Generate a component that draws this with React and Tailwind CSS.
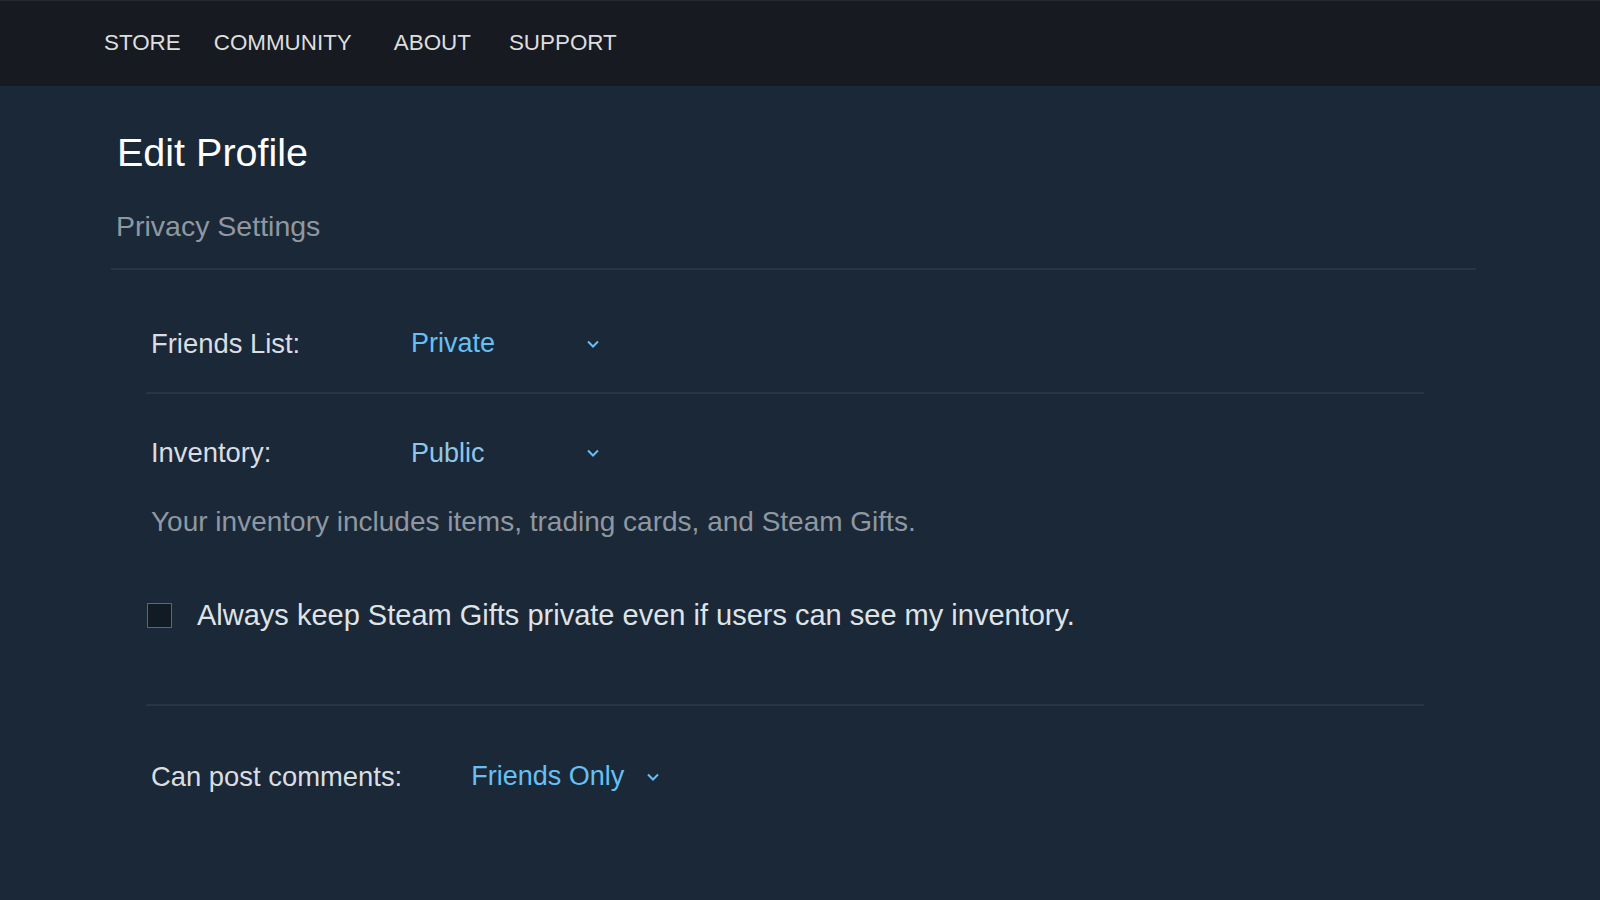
function Chevron() {
    return (
        <svg width="12" height="8" viewBox="0 0 12 8" fill="none" className="shrink-0">
            <path d="M1 1.5 L6 6.5 L11 1.5" stroke="currentColor" strokeWidth="2" />
        </svg>
    );
}

function Select({ value, color }) {
    return (
        <div className={`flex min-w-[188px] items-center justify-between gap-5 text-[27px] ${color}`}>
            <span>{value}</span>
            <span className="text-[#66c0f4]">
                <Chevron />
            </span>
        </div>
    );
}

function Row({ label, children }) {
    return (
        <div className="flex items-center pl-[5px] leading-none">
            <span className="mr-[69px] min-w-[191px] text-[27.4px] text-[#dadee2]">{label}</span>
            {children}
        </div>
    );
}

function App() {
    return (
        <div className="min-h-screen bg-[#1b2838] font-['Liberation_Sans',Arial,sans-serif]">
            {/* Top nav */}
            <div className="flex h-[86px] items-center border-t border-[#252a33] bg-[#171a21] pb-[2px] pl-[104px] text-[22.4px] text-[#dcdedf]">
                <a href="#" className="mr-[33px]">STORE</a>
                <a href="#" className="mr-[42px]">COMMUNITY</a>
                <a href="#" className="mr-[38px]">ABOUT</a>
                <a href="#">SUPPORT</a>
            </div>

            <div className="ml-[111px] w-[1365px]">
                <h1 className="mt-[47px] pl-[6px] text-[39.5px] leading-none text-white">Edit Profile</h1>
                <h2 className="mt-[39px] pl-[5px] text-[28.5px] leading-none text-[#8f98a0]">Privacy Settings</h2>
                <div className="mt-[28px] h-[2px] bg-[#2a3544]"></div>

                {/* Settings */}
                <div className="ml-[35px] w-[1278px]">
                    <div className="mt-[60px]">
                        <Row label="Friends List:">
                            <Select value="Private" color="text-[#66c0f4]" />
                        </Row>
                    </div>
                    <div className="mt-[35px] h-[2px] bg-[#2a3544]"></div>

                    <div className="mt-[45px]">
                        <Row label="Inventory:">
                            <Select value="Public" color="text-[#8fc7e6]" />
                        </Row>
                    </div>
                    <p className="mt-[41px] pl-[5px] text-[28px] leading-none text-[#8f98a0]">
                        Your inventory includes items, trading cards, and Steam Gifts.
                    </p>

                    <label className="mt-[65px] flex items-center pl-[1px] text-[29px] leading-none text-[#dfe3e6]">
                        <span className="mr-[25px] h-[25px] w-[25px] border border-[#5e6670] bg-[#121a23]"></span>
                        Always keep Steam Gifts private even if users can see my inventory.
                    </label>
                    <div className="mt-[74px] h-[2px] bg-[#2a3544]"></div>

                    <div className="mt-[57px]">
                        <Row label="Can post comments:">
                            <Select value="Friends Only" color="text-[#66c0f4]" />
                        </Row>
                    </div>
                </div>
            </div>
        </div>
    );
}

export default App;
